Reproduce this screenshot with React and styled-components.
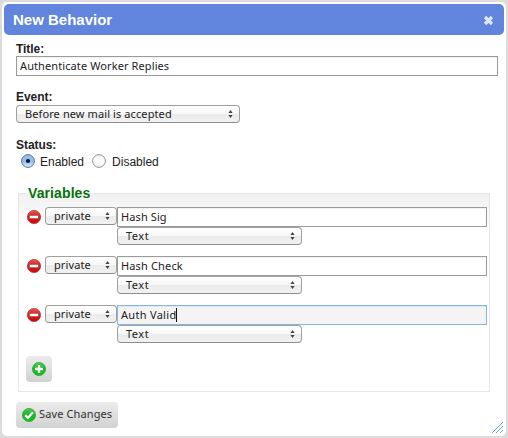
import React from "react";
import styled, { createGlobalStyle } from "styled-components";

const GlobalStyle = createGlobalStyle`
  * { box-sizing: border-box; }
  body { margin: 0; background: #dcdcdc; }
`;

const humanist = `"Noto Sans", "Open Sans", sans-serif`;

const Dialog = styled.main`
  position: relative;
  width: 504px;
  height: 434px;
  margin: 2px;
  padding: 2px;
  background: #fff;
  border-radius: 5px;
  font: 12px/14px "Liberation Sans", Arial, sans-serif;
  color: #222;
`;

const TitleBar = styled.header`
  display: flex;
  align-items: center;
  justify-content: space-between;
  height: 31px;
  padding: 0 10px 0 9px;
  background: #6184dd;
  border-radius: 5px;
`;

const Heading = styled.h1`
  margin: 0;
  font-size: 15px;
  line-height: 31px;
  letter-spacing: 0;
  color: #fff;
`;

const CloseIcon = styled.svg`
  width: 11px;
  height: 11px;
  margin-top: 2px;
`;

const Form = styled.form`
  padding: 7px 6px 0 12px;
`;

const Field = styled.div`
  margin-bottom: ${(p) => p.$gap}px;
`;

const Label = styled.label`
  display: block;
  height: 14px;
  margin-bottom: ${(p) => p.$gap || 0}px;
  font-weight: bold;
  letter-spacing: -0.05px;
`;

const TextBox = styled.div`
  display: flex;
  align-items: center;
  width: ${(p) => p.$width}px;
  height: 20px;
  padding-left: 3px;
  border: 1px solid ${(p) => (p.$focused ? "#83b6e3" : "#9b9b9b")};
  background: ${(p) => (p.$focused ? "#f4f4f4" : "#fff")};
  box-shadow: inset 0 1px 1px rgba(0, 0, 0, 0.06);
  font: 11px/18px ${humanist};
  letter-spacing: ${(p) => p.$tracking}px;
  white-space: nowrap;
`;

const Caret = styled.span`
  width: 1px;
  height: 14px;
  background: #111;
`;

const SelectBox = styled.div`
  display: flex;
  align-items: center;
  justify-content: space-between;
  width: ${(p) => p.$width}px;
  height: 18px;
  padding: 0 6px 0 8px;
  border: 1px solid #a0a0a0;
  border-bottom-color: #8e8e8e;
  border-radius: 4px;
  background: linear-gradient(#fff 0%, #f8f8f8 48%, #ebebeb 52%, #f1f1f1 100%);
  font: 11px/16px ${humanist};
  letter-spacing: ${(p) => p.$tracking}px;
  white-space: nowrap;
`;

const Arrows = styled.svg`
  flex: none;
  width: 5px;
  height: 8px;
`;

const RadioRow = styled.div`
  display: flex;
  align-items: center;
  height: 16px;
  padding-left: 5px;
`;

const Radio = styled.svg`
  width: 14px;
  height: 14px;
`;

const RadioText = styled.span`
  margin: 1px ${(p) => (p.$last ? 0 : 8)}px 0 ${(p) => (p.$last ? 6 : 5)}px;
`;

const Group = styled.fieldset`
  width: 472px;
  height: 206px;
  margin: 0 0 10px 2px;
  padding: 7px 1px 0 8px;
  border: 0;
  background:
    linear-gradient(#e6e6e6, #e6e6e6) 0 7px / 100% 1px no-repeat,
    linear-gradient(#e6e6e6, #e6e6e6) 0 7px / 1px 100% no-repeat,
    linear-gradient(#e6e6e6, #e6e6e6) 100% 7px / 1px 100% no-repeat,
    linear-gradient(#e6e6e6, #e6e6e6) 0 100% / 100% 1px no-repeat,
    linear-gradient(#f0f0f0, #fff 36px) 0 7px / 100% 100% no-repeat;
`;

const GroupTitle = styled.h2`
  width: 67px;
  height: 14px;
  margin: -7px 0 7px;
  padding-left: 2px;
  background: linear-gradient(#fff 7px, #f2f2f2 7px);
  font-size: 14px;
  line-height: 14px;
  letter-spacing: 0.1px;
  color: #08720c;
`;

const VariableRow = styled.div`
  display: grid;
  grid-template-columns: 19px 72px 370px;
  align-items: start;
  height: 49px;
`;

const RemoveIcon = styled.svg`
  width: 16px;
  height: 16px;
  margin-top: 2px;
`;

const Button = styled.button`
  display: flex;
  align-items: center;
  width: ${(p) => p.$width}px;
  height: 26px;
  margin-top: ${(p) => p.$top || 0}px;
  padding: 0 0 0 5px;
  border: 0;
  border-radius: 4px;
  background: linear-gradient(#ececec, #d2d2d2);
  color: #303030;
  font: 11px/16px ${humanist};
  letter-spacing: 0.12px;
  white-space: nowrap;
`;

const ButtonIcon = styled.svg`
  flex: none;
  width: 16px;
  height: 16px;
`;

const ButtonText = styled.span`
  margin: -2px 0 0 2px;
`;

const ResizeGrip = styled.svg`
  position: absolute;
  right: 3px;
  bottom: 3px;
  width: 11px;
  height: 11px;
`;

function Select({ width, tracking = 0, children }) {
  return (
    <SelectBox $width={width} $tracking={tracking}>
      <span>{children}</span>
      <Arrows viewBox="0 0 5 8">
        <path d="M2.5 0 4.6 3H.4ZM2.5 8 .4 5h4.2Z" fill="#444" />
      </Arrows>
    </SelectBox>
  );
}

function RadioButton({ checked }) {
  return (
    <Radio viewBox="0 0 14 14">
      <defs>
        <linearGradient id={checked ? "radioOn" : "radioOff"} x2="0" y2="1">
          <stop stopColor={checked ? "#9dc2eb" : "#eee"} />
          <stop offset=".5" stopColor={checked ? "#8dbdef" : "#fff"} />
          <stop offset="1" stopColor={checked ? "#d5f1ff" : "#eee"} />
        </linearGradient>
      </defs>
      <circle
        cx="7"
        cy="7"
        r="6.4"
        fill={checked ? "url(#radioOn)" : "url(#radioOff)"}
        stroke={checked ? "#61718f" : "#929292"}
      />
      {checked && <circle cx="7" cy="7" r="2.1" fill="#07142c" />}
    </Radio>
  );
}

function Variable({ name, focused, tracking }) {
  return (
    <VariableRow>
      <RemoveIcon viewBox="0 0 16 16">
        <defs>
          <linearGradient id="removeFill" x2="0" y2="1">
            <stop stopColor="#e45a55" />
            <stop offset=".45" stopColor="#cf2424" />
            <stop offset="1" stopColor="#c50b0b" />
          </linearGradient>
        </defs>
        <circle cx="8" cy="8" r="6.6" fill="url(#removeFill)" stroke="#c23434" strokeWidth=".8" />
        <rect x="3.5" y="6.5" width="9" height="3" rx=".5" fill="#fff" stroke="#b51414" strokeWidth=".4" />
      </RemoveIcon>
      <Select width={72} tracking={0.1}>private</Select>
      <div>
        <TextBox $width={370} $focused={focused} $tracking={tracking}>
          <span>{name}</span>
          {focused && <Caret />}
        </TextBox>
        <Select width={185} tracking={0.5}>Text</Select>
      </div>
    </VariableRow>
  );
}

function GreenDisc({ id, children }) {
  return (
    <ButtonIcon viewBox="0 0 16 16">
      <defs>
        <linearGradient id={id} x2="0" y2="1">
          <stop stopColor="#51c94d" />
          <stop offset=".5" stopColor="#18b52b" />
          <stop offset="1" stopColor="#12c21e" />
        </linearGradient>
      </defs>
      <circle cx="8" cy="8" r="6.6" fill={`url(#${id})`} stroke="#36a93a" strokeWidth=".8" />
      {children}
    </ButtonIcon>
  );
}

export default function App() {
  return (
    <>
      <GlobalStyle />
      <Dialog>
        <TitleBar>
          <Heading>New Behavior</Heading>
          <CloseIcon viewBox="0 0 11 11">
            <path d="m2 2 7 7M9 2 2 9" stroke="#dce7f7" strokeWidth="3.2" />
          </CloseIcon>
        </TitleBar>
        <Form>
          <Field $gap={14}>
            <Label>Title:</Label>
            <TextBox $width={482} $tracking={0.1}>Authenticate Worker Replies</TextBox>
          </Field>
          <Field $gap={15}>
            <Label $gap={1}>Event:</Label>
            <Select width={224} tracking={0.1}>Before new mail is accepted</Select>
          </Field>
          <Field $gap={17}>
            <Label $gap={1}>Status:</Label>
            <RadioRow>
              <RadioButton checked />
              <RadioText>Enabled</RadioText>
              <RadioButton />
              <RadioText $last>Disabled</RadioText>
            </RadioRow>
          </Field>
          <Group>
            <GroupTitle>Variables</GroupTitle>
            <Variable name="Hash Sig" tracking={0.1} />
            <Variable name="Hash Check" tracking={0.15} />
            <Variable name="Auth Valid" tracking={0.3} focused />
            <Button type="button" $width={26} $top={2} aria-label="Add variable">
              <GreenDisc id="addFill">
                <path d="M8 4v8M4 8h8" stroke="#fff" strokeWidth="2.4" />
              </GreenDisc>
            </Button>
          </Group>
          <Button type="button" $width={102}>
            <GreenDisc id="saveFill">
              <path d="m4.2 8.1 2.7 2.8 5-5.6" fill="none" stroke="#fff" strokeWidth="2.3" />
            </GreenDisc>
            <ButtonText>Save Changes</ButtonText>
          </Button>
        </Form>
        <ResizeGrip viewBox="0 0 11 11">
          <path d="M0 11 11 0M4 11l7-7M8 11l3-3" stroke="#67a6ed" strokeWidth="1" />
        </ResizeGrip>
      </Dialog>
    </>
  );
}
